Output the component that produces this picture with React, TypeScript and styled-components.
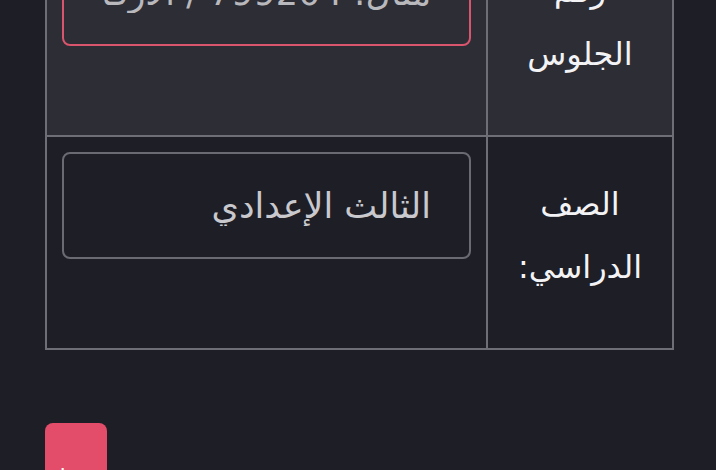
import React from "react";
import styled, { createGlobalStyle } from "styled-components";

const GlobalStyle = createGlobalStyle`
  html, body {
    margin: 0;
    padding: 0;
    background: #1e1e27;
    font-family: "DejaVu Sans", "Noto Sans", sans-serif;
    overflow: hidden;
  }
`;

const Page = styled.div`
  direction: rtl;
  margin-top: -78px;
  padding: 0 42px 0 45px;
`;

const Table = styled.table`
  width: 100%;
  border-collapse: collapse;
  border: 2px solid #6e6e76;
`;

const Row = styled.tr<{ $shade?: boolean }>`
  background: ${(p) => (p.$shade ? "#2d2d36" : "#1e1e27")};
  border-bottom: 2px solid #6e6e76;
`;

const LabelCell = styled.th`
  width: 186px;
  height: 213px;
  box-sizing: border-box;
  padding: 30px 6px 44px;
  border-left: 2px solid #6e6e76;
  text-align: center;
  vertical-align: middle;
  font-weight: normal;
  font-size: 32px;
  line-height: 63px;
  color: #f3f3f5;
`;

const InputCell = styled.td`
  vertical-align: top;
  padding: 15px 15px 0 15px;
`;

const Field = styled.input<{ $active?: boolean }>`
  display: block;
  box-sizing: border-box;
  width: 100%;
  height: 107px;
  padding: 0 38px;
  border: 2px solid ${(p) => (p.$active ? "#d9546d" : "#6a6a72")};
  border-radius: 8px;
  background: transparent;
  color: #c9c9cd;
  font-family: "DejaVu Sans", sans-serif;
  font-size: 35px;
  text-align: right;
  direction: rtl;
  outline: none;
  caret-color: #dcdce0;
  &::placeholder {
    color: #b8b8bd;
  }
`;

const Actions = styled.div`
  display: flex;
  justify-content: flex-end;
  margin-top: 73px;
`;

const Button = styled.button`
  background: #e34d69;
  color: #ffffff;
  border: none;
  border-radius: 8px;
  width: 62px;
  padding: 19px 0 28px;
  font-family: "DejaVu Sans", sans-serif;
  font-size: 26px;
  line-height: 63px;
  cursor: pointer;
`;

export default function App() {
  return (
    <>
      <GlobalStyle />
      <Page>
        <Table>
          <tbody>
            <Row $shade>
              <LabelCell>
                رقم
                <br />
                الجلوس
              </LabelCell>
              <InputCell>
                <Field
                  $active
                  autoFocus
                  placeholder="مثال: 799204 / الأرقام بالإنجليزية"
                />
              </InputCell>
            </Row>
            <Row>
              <LabelCell>
                الصف
                <br />
                الدراسي:
              </LabelCell>
              <InputCell>
                <Field readOnly defaultValue="الثالث الإعدادي" />
              </InputCell>
            </Row>
          </tbody>
        </Table>
        <Actions>
          <Button>بحث</Button>
        </Actions>
      </Page>
    </>
  );
}
